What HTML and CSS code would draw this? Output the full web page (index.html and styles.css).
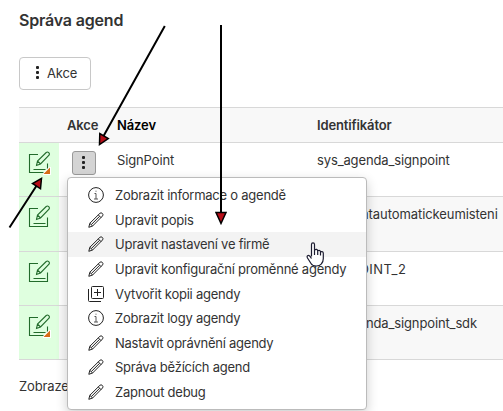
FILE: index.html
```html
<!DOCTYPE html>
<html lang="cs">
<head>
<meta charset="utf-8">
<title>Správa agend</title>
<link rel="stylesheet" href="styles.css">
</head>
<body>
<svg class="defs" width="0" height="0">
  <symbol id="edit" viewBox="0 0 24 24"><path d="M11 3.500H2.500v18h18V12.500M6.500 18.500h12M9.500 14.500l1-4.500L19.200 1.500q1.300-1 2.500.1t.3 2.600L13.500 13zM10.500 10l3 3"/></symbol>
  <symbol id="pencil" viewBox="0 0 16 16"><path d="M.8 15.300l1-4L11.900 1.300q1.200-1 2.400.1t.3 2.500L4.600 14zM1.800 11.300l2.800 2.700M10.300 2.900l2.800 2.800M3.300 12.600l8.300-8.300"/></symbol>
  <symbol id="info" viewBox="0 0 16 16"><circle cx="8" cy="8" r="7.400"/><path class="glyph" d="M6.500 6.500H8v5.500M6 12h4M7.500 4.200h1"/></symbol>
  <symbol id="copy" viewBox="0 0 16 16"><rect x="3.500" y=".5" width="12" height="12" rx="1"/><path d="M9.500 3v7M6 6.500h7M.5 3v11.500q0 1 1 1H13"/></symbol>
</svg>
<main class="page">
  <h1 class="title">Správa agend</h1>
  <button class="actions"><span class="dots"><i></i><i></i><i></i></span>Akce</button>
  <div class="table">
    <div class="row head"><span></span><span class="head-action">Akce</span><span class="head-name">Název</span><span>Identifikátor</span></div>
    <div class="row"><div class="state"><svg class="edit"><use href="#edit"/></svg><svg class="corner" viewBox="0 0 8 8"><path class="corner-back" d="M0 8V6L6 0H8V8z"/><path class="corner-mark" d="M.5 7L7 .5V7z"/></svg></div><div class="cell-menu"><button class="more"><span class="dots"><i></i><i></i><i></i></span></button></div><span class="cell">SignPoint</span><span class="cell">sys_agenda_signpoint</span></div>
    <div class="row alt"><div class="state"><svg class="edit"><use href="#edit"/></svg></div><span></span><span></span><span class="cell long">signpointautomatickeumisteni</span></div>
    <div class="row"><div class="state"><svg class="edit"><use href="#edit"/></svg></div><span></span><span></span><span class="cell caps">SIGNPOINT_2</span></div>
    <div class="row alt"><div class="state"><svg class="edit"><use href="#edit"/></svg><svg class="corner" viewBox="0 0 8 8"><path class="corner-back" d="M0 8V6L6 0H8V8z"/><path class="corner-mark" d="M.5 7L7 .5V7z"/></svg></div><span></span><span></span><span class="cell">sys_agenda_signpoint_sdk</span></div>
  </div>
  <p class="summary">Zobrazeno</p>
</main>
<div class="menu">
  <div class="item"><svg><use href="#info"/></svg><span>Zobrazit informace o agendě</span></div>
  <div class="item"><svg><use href="#pencil"/></svg><span>Upravit popis</span></div>
  <div class="item active"><svg><use href="#pencil"/></svg><span>Upravit nastavení ve firmě</span></div>
  <div class="item"><svg><use href="#pencil"/></svg><span>Upravit konfigurační proměnné agendy</span></div>
  <div class="item"><svg><use href="#copy"/></svg><span>Vytvořit kopii agendy</span></div>
  <div class="item"><svg><use href="#info"/></svg><span>Zobrazit logy agendy</span></div>
  <div class="item"><svg><use href="#pencil"/></svg><span>Nastavit oprávnění agendy</span></div>
  <div class="item"><svg><use href="#pencil"/></svg><span>Správa běžících agend</span></div>
  <div class="item"><svg><use href="#pencil"/></svg><span>Zapnout debug</span></div>
</div>
<svg class="overlay" viewBox="0 0 503 411">
  <g class="arrow">
    <path d="M164.800 26L103 137M221 25V214M9.500 227.500L37 185"/>
    <path class="tip" d="M99.500 144.500L99.800 133.500L108.300 138.500zM221 223.500L216 212.500H226zM41.500 178.300L32.500 183.500L40.500 188.800z"/>
  </g>
  <path class="hand" d="M311.500 256.500V244.500q0-1.700 1.500-1.700t1.500 1.700v5.500q2.500-1.500 3.200.8 2.300-1 2.800 1 2.700-.8 2.800 1.700v5q0 3.500-2 5.500-1.500 2-5 2-4 0-5.300-2.500l-3.500-5.500q-1-2 .5-2.500t3.500 3M314.500 250v5M317.700 251v4M320.500 252v3.500"/>
</svg>
</body>
</html>
```
FILE: styles.css
```css
* { box-sizing: border-box; }
body { margin: 0; width: 503px; height: 411px; overflow: hidden; position: relative; background: #fff; color: #333; font: 13px/18px Inter, "Liberation Sans", sans-serif; letter-spacing: -.13px; }
.defs { position: absolute; }
.page { padding: 11px 0 0 19px; }
.title { margin: 0; font-size: 16px; line-height: 19px; font-weight: 600; letter-spacing: -.18px; }
button { font: inherit; color: inherit; letter-spacing: inherit; }
.actions { display: flex; align-items: center; gap: 8px; width: 72px; height: 33px; margin: 27px 0 17px; padding: 0 0 2px 16px; background: #fff; border: 1px solid #c8c8c8; border-radius: 4px; letter-spacing: -.2px; }
.dots { display: flex; flex-direction: column; gap: 2px; }
.dots i { width: 3px; height: 3px; border-radius: 1px; background: #222; }
.table { border-top: 1px solid #d8d8d8; }
.row { display: grid; grid-template-columns: 40px 58px 200px 1fr; height: 54.3px; border-bottom: 1px solid #d8d8d8; }
.head { height: 35px; padding-top: 8px; background: #f8f8f8; font-weight: 600; }
.head-action { padding-left: 8px; }
.head-name { color: #000; }
.alt { background: #f8f8f8; }
.cell { padding-top: 8px; }
.long { letter-spacing: -.08px; }
.caps { letter-spacing: .45px; }
.state { position: relative; padding: 8px 0 0 8px; background: #dfffdf; }
.edit { display: block; width: 24px; height: 24px; fill: none; stroke: #226b2b; stroke-width: 1.1; }
.corner { position: absolute; left: 24px; top: 24px; width: 8px; height: 8px; }
.corner-back { fill: #fff; }
.corner-mark { fill: #d66d18; }
.cell-menu { padding: 8px 0 0 13px; }
.more { display: flex; align-items: center; justify-content: center; width: 24px; height: 24px; padding: 0 1px 1px 0; background: #d4d4d4; border: 1px solid #999; border-radius: 3px; }
.summary { margin: 17px 0 0; }
.menu { position: absolute; left: 67px; top: 177px; width: 300px; height: 233px; padding: 5px 0; background: #fff; border: 1px solid #bbb; border-radius: 4px; box-shadow: 0 4px 12px rgba(0, 0, 0, .2); letter-spacing: -.24px; }
.item { display: flex; align-items: center; gap: 11px; height: 24.6px; padding-left: 20px; }
.item svg { width: 16px; height: 16px; fill: none; stroke: #222; stroke-width: 1; }
.glyph { stroke: #555; }
.active { background: #f3f3f3; }
.overlay { position: absolute; left: 0; top: 0; width: 503px; height: 411px; }
.arrow { fill: none; stroke: #000; stroke-width: 2; }
.tip { fill: #b80d18; stroke-width: 1.5; }
.hand { fill: #fff; stroke: #1c1c30; stroke-width: 1.2; }
```
